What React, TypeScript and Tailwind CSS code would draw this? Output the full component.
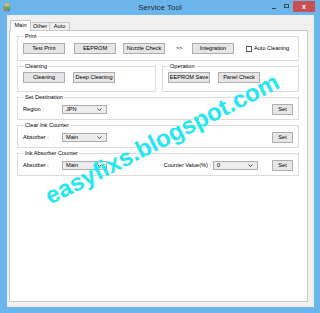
import type { ReactNode } from 'react';

const font = "font-['Liberation_Sans',Arial,sans-serif]";

function Btn({ label, w = 'w-[42px]' }: { label: string; w?: string }) {
  return (
    <div className={`${w} h-[11px] shrink-0 flex items-center justify-center border border-[#adadad] bg-[#e6e6e6] text-[5.6px] leading-none text-black`}>
      {label}
    </div>
  );
}

function Combo({ value, w = 'w-[45px]' }: { value: string; w?: string }) {
  return (
    <div className={`${w} h-[9px] shrink-0 flex items-center justify-between border border-[#acacac] bg-[#ececec] pl-[3px] pr-[4px] text-[5.6px] leading-none text-black`}>
      <span>{value}</span>
      <svg width="5" height="3" viewBox="0 0 5 3">
        <polyline points="0.5,0.5 2.5,2.5 4.5,0.5" fill="none" stroke="#333" strokeWidth="0.9" />
      </svg>
    </div>
  );
}

function Group({ label, className = '', children }: { label: string; className?: string; children: ReactNode }) {
  return (
    <fieldset className={`border border-[#dcdcdc] pl-[5px] pr-[5px] ${className}`}>
      <legend className="ml-[1px] px-[1px] text-[5.6px] leading-[8px] text-black">{label}</legend>
      {children}
    </fieldset>
  );
}

export default function App() {
  return (
    <div className={`relative w-[320px] h-[313px] overflow-hidden bg-[#6cb5ea] flex flex-col ${font}`}>
      {/* Title bar */}
      <div className="h-[15px] shrink-0 grid grid-cols-[1fr_auto_1fr] items-center">
        <div className="pl-[3px] flex items-center">
          <svg width="8" height="9" viewBox="0 0 8 9">
            <rect x="2" y="0.5" width="4" height="3" fill="#f4b63c" />
            <rect x="0.5" y="3.5" width="7" height="3" fill="#6aa84f" />
            <rect x="1.5" y="6" width="2" height="2.5" fill="#e06040" />
            <rect x="4.5" y="6" width="2" height="2.5" fill="#3d7fd0" />
          </svg>
        </div>
        <div className="text-[8px] leading-none text-[#1e2a36]">Service Tool</div>
        <div className="flex items-start justify-end self-start h-full">
          <div className="w-[13px] h-[12px] flex items-center justify-center mt-[1px]">
            <div className="w-[4px] h-[1px] bg-[#3a4a5a] mt-[2px]" />
          </div>
          <div className="w-[13px] h-[12px] flex items-center justify-center mt-[1px]">
            <div className="w-[5px] h-[4px] border border-[#3a4a5a] mb-[2px]" />
          </div>
          <div className="w-[22px] h-[11px] mt-[1px] mr-[5px] bg-[#c75050] flex items-center justify-center text-white text-[7px] font-bold leading-none">
            x
          </div>
        </div>
      </div>

      {/* Client area */}
      <div className="flex-1 ml-[7px] mr-[6px] mb-[6px] bg-[#f0f0f0] pl-[2px] pr-[6px] pt-[5px] pb-[5px] flex flex-col">
        {/* Tabs */}
        <div className="h-[10px] flex items-end pl-[1px] text-[5.6px] leading-none text-black">
          <div className="relative z-10 -mb-px h-[11px] w-[21px] bg-white border border-b-0 border-[#c8c8c8] flex items-center justify-center">
            Main
          </div>
          <div className="h-[8px] w-[19px] bg-[#f0f0f0] border border-l-0 border-b-0 border-[#c8c8c8] flex items-center justify-center">
            Other
          </div>
          <div className="h-[8px] w-[20px] bg-[#f0f0f0] border border-l-0 border-b-0 border-[#c8c8c8] flex items-center justify-center">
            Auto
          </div>
        </div>

        {/* Tab page */}
        <div className="flex-1 bg-white border border-[#c8c8c8] pl-[7px] pr-[8px] pt-[1px] flex flex-col gap-[1px] text-[5.6px] leading-none text-black">
          <Group label="Print" className="pt-[3px] pb-[6px]">
            <div className="flex items-center">
              <Btn label="Test Print" />
              <div className="ml-[9px]"><Btn label="EEPROM" /></div>
              <div className="ml-[7px]"><Btn label="Nozzle Check" /></div>
              <span className="ml-[11px] w-[16px]">&gt;&gt;</span>
              <Btn label="Integration" />
              <div className="ml-[12px] w-[6px] h-[6px] border border-[#555] bg-white" />
              <span className="ml-[2px]">Auto Cleaning</span>
            </div>
          </Group>

          <div className="grid grid-cols-[139px_1fr] gap-[6px]">
            <Group label="Cleaning" className="pt-[2px] pb-[8px]">
              <div className="flex items-center gap-[8px]">
                <Btn label="Cleaning" />
                <Btn label="Deep Cleaning" />
              </div>
            </Group>
            <Group label="Operation" className="pt-[2px] pb-[8px] pl-[4px]">
              <div className="flex items-center gap-[8px]">
                <Btn label="EEPROM Save" />
                <Btn label="Panel Check" />
              </div>
            </Group>
          </div>

          <Group label="Set Destination" className="pt-[3px] pb-[4px]">
            <div className="flex items-center">
              <span className="w-[39px]">Region :</span>
              <Combo value="JPN" />
              <div className="flex-1" />
              <Btn label="Set" w="w-[21px]" />
            </div>
          </Group>

          <Group label="Clear Ink Counter" className="pt-[3px] pb-[4px]">
            <div className="flex items-center">
              <span className="w-[39px]">Absorber :</span>
              <Combo value="Main" />
              <div className="flex-1" />
              <Btn label="Set" w="w-[21px]" />
            </div>
          </Group>

          <Group label="Ink Absorber Counter" className="pt-[3px] pb-[4px]">
            <div className="flex items-center">
              <span className="w-[39px]">Absorber :</span>
              <Combo value="Main" />
              <div className="flex-1" />
              <span className="mr-[2px]">Counter Value(%) :</span>
              <Combo value="0" />
              <div className="w-[14px]" />
              <Btn label="Set" w="w-[21px]" />
            </div>
          </Group>
        </div>
      </div>

      {/* Watermark */}
      <div className="absolute left-[162px] top-[139px] -translate-x-1/2 -translate-y-1/2 -rotate-[27deg] whitespace-nowrap text-[24px] font-bold leading-none text-[#26e6f4]">
        easyfixs.blogspot.com
      </div>
    </div>
  );
}
